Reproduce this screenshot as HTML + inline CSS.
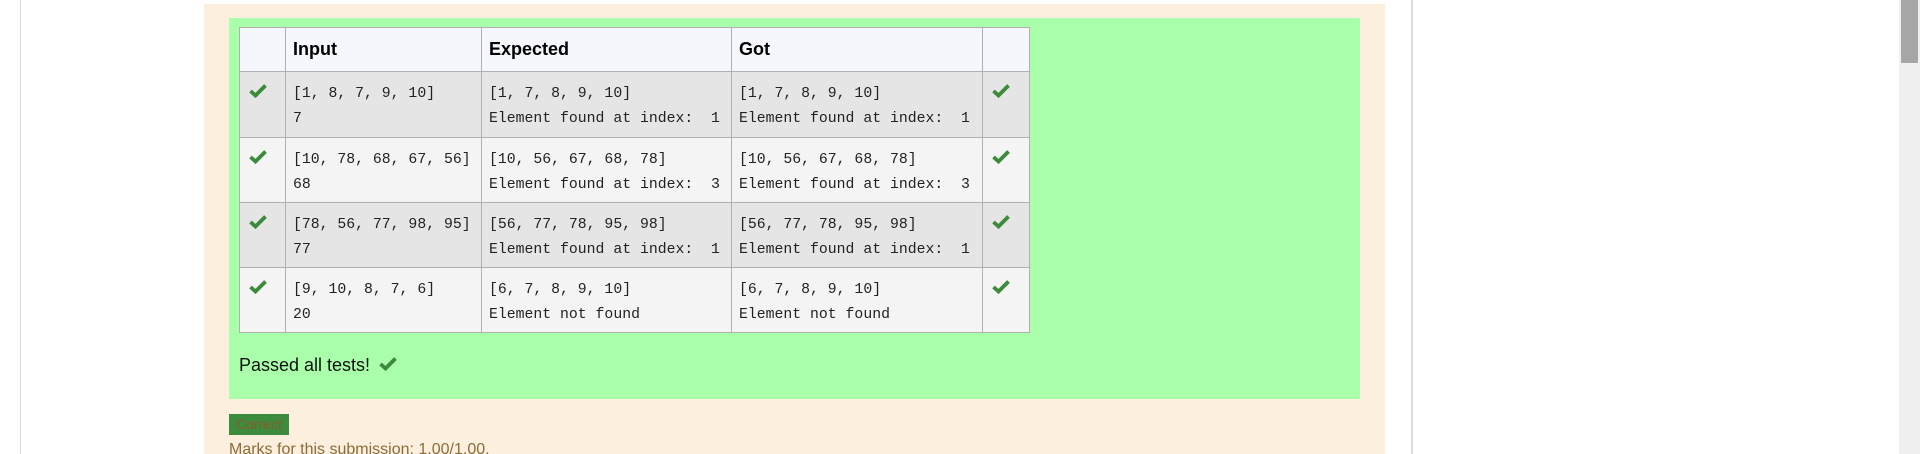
<!DOCTYPE html>
<html><head><style>
html,body{margin:0;padding:0;width:1920px;height:454px;overflow:hidden;background:#fff;position:relative;font-family:"Liberation Sans",sans-serif}
.abs{position:absolute}
table{border-collapse:collapse;position:absolute;left:239px;top:27px;table-layout:fixed}
td,th{border:1px solid #b0b0b0;padding:0 0 0 7px;vertical-align:top;text-align:left}
th{height:43px;background:#f5f7fd;font-size:18px;font-weight:bold;vertical-align:middle;color:#000}
td{font-family:"Liberation Mono",monospace;font-size:14.8px;line-height:25px;padding-top:10px;color:#222;white-space:pre}
tr.o td{background:#e5e5e5}
tr.e td{background:#f4f4f4}
.ck{width:18px;height:14px}
</style></head><body>
<div class="abs" style="left:20px;top:0;width:1px;height:454px;background:#dcdcdc"></div>
<div class="abs" style="left:1411px;top:0;width:2px;height:454px;background:#dcdcdc"></div>
<div class="abs" style="left:1899px;top:0;width:21px;height:454px;background:#f0f0f0"></div>
<div class="abs" style="left:1901px;top:0;width:17px;height:63px;background:#a6a6a6"></div>
<div class="abs" style="left:204px;top:4px;width:1181px;height:450px;background:#fcefdd"></div>
<div class="abs" style="left:229px;top:18px;width:1131px;height:381px;background:#aaffaa"></div>
<svg width="0" height="0" style="position:absolute"><defs><symbol id="c" viewBox="0 0 18 14"><path d="M1.5 7 L6.5 11.5 L16.5 1.5" fill="none" stroke="#3c8a3c" stroke-width="3.8"/></symbol></defs></svg>
<table>
<colgroup><col style="width:46px"><col style="width:196px"><col style="width:250px"><col style="width:251px"><col style="width:47px"></colgroup>
<tr><th></th><th>Input</th><th>Expected</th><th>Got</th><th></th></tr>
<tr class="o" style="height:66px"><td><svg class="ck" style="margin:2px 0 0 2px"><use href="#c"/></svg></td><td>[1, 8, 7, 9, 10]
7</td><td>[1, 7, 8, 9, 10]
Element found at index:  1</td><td>[1, 7, 8, 9, 10]
Element found at index:  1</td><td><svg class="ck" style="margin:2px 0 0 2px"><use href="#c"/></svg></td></tr>
<tr class="e" style="height:65px"><td><svg class="ck" style="margin:2px 0 0 2px"><use href="#c"/></svg></td><td>[10, 78, 68, 67, 56]
68</td><td>[10, 56, 67, 68, 78]
Element found at index:  3</td><td>[10, 56, 67, 68, 78]
Element found at index:  3</td><td><svg class="ck" style="margin:2px 0 0 2px"><use href="#c"/></svg></td></tr>
<tr class="o" style="height:65px"><td><svg class="ck" style="margin:2px 0 0 2px"><use href="#c"/></svg></td><td>[78, 56, 77, 98, 95]
77</td><td>[56, 77, 78, 95, 98]
Element found at index:  1</td><td>[56, 77, 78, 95, 98]
Element found at index:  1</td><td><svg class="ck" style="margin:2px 0 0 2px"><use href="#c"/></svg></td></tr>
<tr class="e" style="height:65px"><td><svg class="ck" style="margin:2px 0 0 2px"><use href="#c"/></svg></td><td>[9, 10, 8, 7, 6]
20</td><td>[6, 7, 8, 9, 10]
Element not found</td><td>[6, 7, 8, 9, 10]
Element not found</td><td><svg class="ck" style="margin:2px 0 0 2px"><use href="#c"/></svg></td></tr>
</table>
<div class="abs" style="left:239px;top:355px;font-size:18px;color:#111">Passed all tests!</div>
<svg class="abs ck" style="left:379px;top:357px"><use href="#c"/></svg>
<div class="abs" style="left:229px;top:414px;width:60px;height:21px;background:#3d8b3d;color:#8b5a2b;font-size:14px;line-height:21px;text-align:center">Correct</div>
<div class="abs" style="left:229px;top:441px;font-size:16px;color:#8a6d3b">Marks for this submission: 1.00/1.00.</div>
</body></html>
